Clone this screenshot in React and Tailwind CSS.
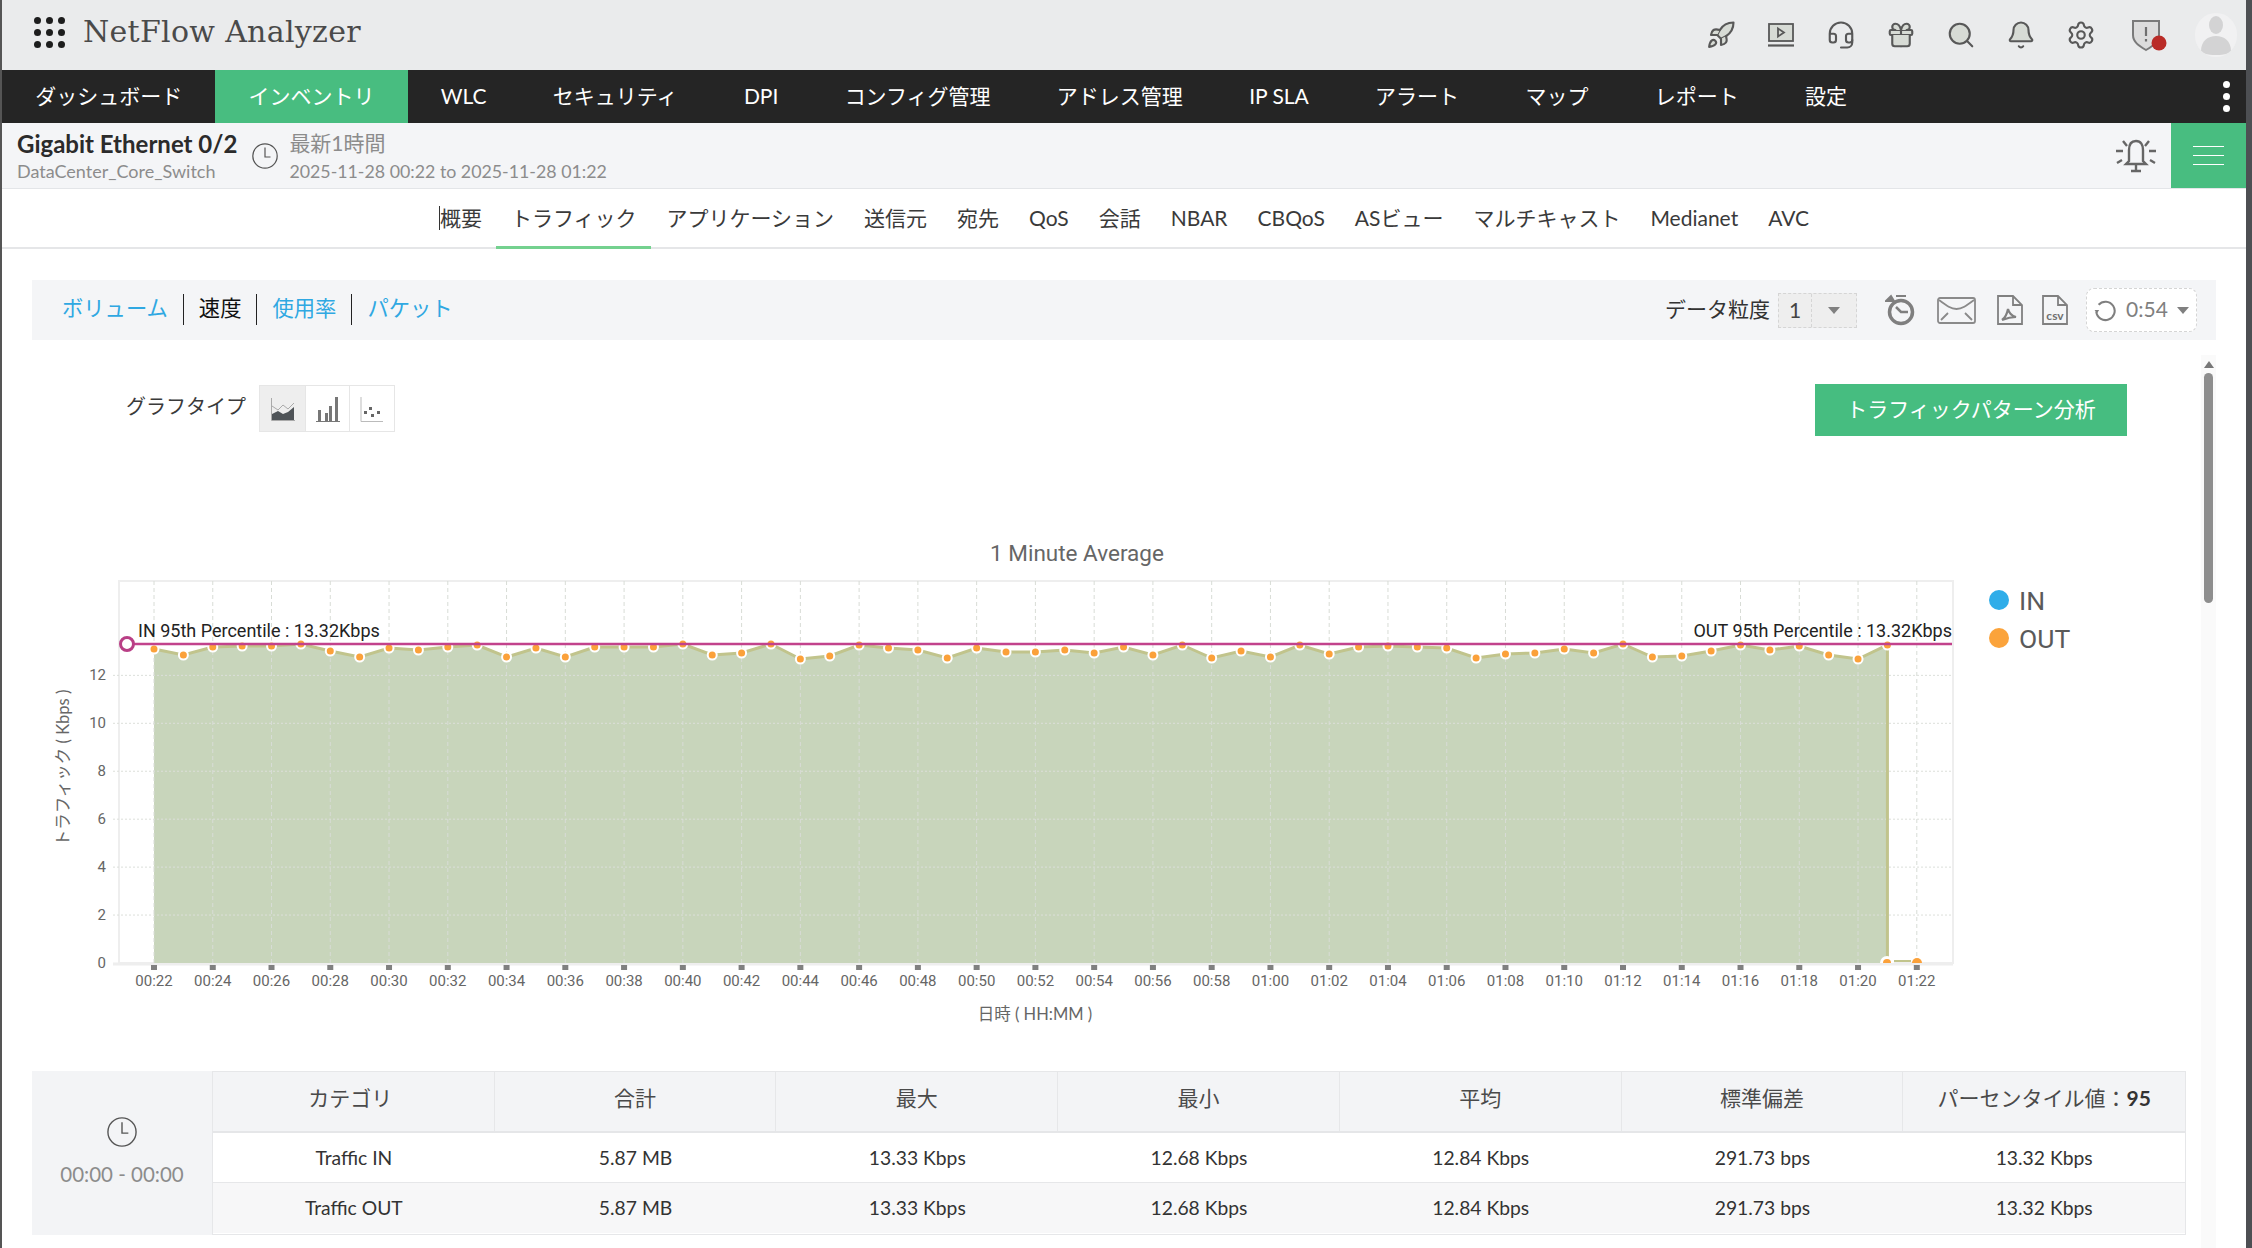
import React from 'react'
import { Rocket, Headset, Gift, Search, Bell, Settings } from 'lucide-react'

const NAV = ['ダッシュボード', 'インベントリ', 'WLC', 'セキュリティ', 'DPI', 'コンフィグ管理', 'アドレス管理', 'IP SLA', 'アラート', 'マップ', 'レポート', '設定']
const TABS = ['トラフィック', 'アプリケーション', '送信元', '宛先', 'QoS', '会話', 'NBAR', 'CBQoS', 'ASビュー', 'マルチキャスト', 'Medianet', 'AVC']
const HEAD = ['カテゴリ', '合計', '最大', '最小', '平均', '標準偏差']
const ROWS = [
  ['Traffic IN', '5.87 MB', '13.33 Kbps', '12.68 Kbps', '12.84 Kbps', '291.73 bps', '13.32 Kbps'],
  ['Traffic OUT', '5.87 MB', '13.33 Kbps', '12.68 Kbps', '12.84 Kbps', '291.73 bps', '13.32 Kbps'],
]

// y pixel of each minute sample, read off the plot
const SAMPLES = [
  649, 655, 647, 646, 646, 644, 651, 657, 648, 650, 647, 645, 657, 648, 657, 647, 647, 647, 644,
  655, 653, 644, 659, 656, 645, 648, 650, 658, 648, 652, 652, 650, 653, 647, 655, 645, 658, 651, 657,
  645, 654, 647, 646, 647, 648, 658, 654, 653, 649, 653, 644, 657, 656, 651, 645, 650, 646, 655, 659, 645,
]
const X0 = 154
const STEP = 29.38
const BOTTOM = 963
const xAt = i => X0 + i * STEP

function minuteLabel(i){
  const total = 22 + i
  const h = Math.floor(total / 60)
  const m = total % 60
  return `${String(h).padStart(2, '0')}:${String(m).padStart(2, '0')}`
}

function Chart(){
  const line = SAMPLES.map((y, i) => `${xAt(i)},${y}`).join(' ')
  const area = `${X0},${BOTTOM} ${line} ${xAt(59)},${BOTTOM}`
  const evens = Array.from({ length: 31 }, (_, i) => i * 2)
  const yTicks = [0, 2, 4, 6, 8, 10, 12]
  return (
    <svg viewBox="32 530 2169 510" className="w-[2169px] h-[510px] block font-[Roboto,sans-serif]">
      <text x="1077" y="561" textAnchor="middle" fontSize="22.500" fill="#666">1 Minute Average</text>
      <rect x="119" y="581" width="1834" height="382" fill="#fff" stroke="#eee" strokeWidth="2" />
      <line x1="113" x2="1953" y1={BOTTOM + 1} y2={BOTTOM + 1} stroke="#eee" strokeWidth="3" />
      <polygon points={area} fill="#c8d5bb" />
      {evens.map(m => (
        <g key={m}>
          <line x1={xAt(m)} x2={xAt(m)} y1="581" y2={BOTTOM} stroke="#d8dcd6" strokeDasharray="4 3" />
          <rect x={xAt(m) - 3} y="965" width="6" height="5" fill="#808080" />
          <text x={xAt(m)} y="986" textAnchor="middle" fontSize="15" fill="#666">{minuteLabel(m)}</text>
        </g>
      ))}
      {yTicks.map(v => {
        const y = BOTTOM - v * 23.97
        return (
          <g key={v}>
            {v > 0 && <line x1="113" x2="1953" y1={y} y2={y} stroke="#dcdfda" strokeDasharray="2 2" />}
            <text x="106" y={y + 5} textAnchor="end" fontSize="15" fill="#666">{v}</text>
          </g>
        )
      })}
      <polyline points={`${line} ${xAt(59)},${BOTTOM}`} fill="none" stroke="#c1c48c" strokeWidth="3" />
      <line x1="1894" x2="1911" y1="961" y2="961" stroke="#c1c48c" strokeWidth="2" />
      {SAMPLES.map((y, i) => (
        <circle key={i} cx={xAt(i)} cy={y} r="4.500" fill="#fba13a" stroke="#fff" strokeWidth="2" />
      ))}
      <path d="M1880 963a7 7 0 0 1 14 0z" fill="#fff" />
      <path d="M1883 963a4 4 0 0 1 8 0z" fill="#fba13a" />
      <path d="M1912 963a5 5 0 0 1 10 0z" fill="#fba13a" />
      <line x1="127" x2="1952" y1="644" y2="644" stroke="#c2428c" strokeWidth="2.500" />
      <circle cx="127" cy="644" r="6.500" fill="#fff" stroke="#b93f86" strokeWidth="3" />
      <text x="138" y="637" fontSize="18" fill="#222">IN 95th Percentile : 13.32Kbps</text>
      <text x="1952" y="637" textAnchor="end" fontSize="18" fill="#222">OUT 95th Percentile : 13.32Kbps</text>
      <text x="1035" y="1020" textAnchor="middle" fontSize="16.500" fill="#666" className="font-[Lato,'Noto_Sans_CJK_JP',sans-serif]">日時 ( HH:MM )</text>
      <text transform="translate(69 768) rotate(-90)" textAnchor="middle" fontSize="16.500" fill="#666" className="font-[Lato,'Noto_Sans_CJK_JP',sans-serif]">トラフィック ( Kbps )</text>
      <circle cx="1999" cy="600" r="10" fill="#2fade9" />
      <text x="2019" y="610" fontSize="26.500" fill="#5a5a5a">IN</text>
      <circle cx="1999" cy="638" r="10" fill="#fba33b" />
      <text x="2019" y="648" fontSize="26.500" fill="#5a5a5a">OUT</text>
    </svg>
  )
}

function ClockIcon({size = 26, color = '#555'}){
  return (
    <svg width={size} height={size} viewBox="0 0 26 26" fill="none" stroke={color} strokeWidth="1.2">
      <circle cx="13" cy="13" r="12.2" />
      <path d="M13 4.500V14H18.500" />
    </svg>
  )
}

function TopIcons(){
  const common = { size: 30, color: '#585858', strokeWidth: 1.7 }
  const box = 'w-[60px] flex items-center justify-center'
  return (
    <div className="ml-auto flex items-center pr-[9px]">
      <div className={box}><Rocket {...common} fill="#d7dbd5" /></div>
      <div className={box}>
        <svg width="28" height="28" viewBox="0 0 28 28" fill="none" stroke="#585858" strokeWidth="1.8">
          <rect x="2" y="3" width="24" height="17" fill="#d7dbd5" />
          <path d="M11 7.500v8l6-4z" />
          <path d="M1 24.500h26" strokeWidth="2.200" />
        </svg>
      </div>
      <div className={box}><Headset {...common} /></div>
      <div className={box}><Gift {...common} fill="#d7dbd5" /></div>
      <div className={box}><Search {...common} fill="#d7dbd5" /></div>
      <div className={box}><Bell {...common} fill="#d7dbd5" /></div>
      <div className={box}><Settings {...common} /></div>
      <div className="w-[60px] ml-[8px] flex items-center justify-center">
        <svg width="38" height="34" viewBox="0 0 38 34">
          <path d="M3 3h26v14c0 7-6 11-13 15C9 28 3 24 3 17z" fill="#dcdcdc" stroke="#7a7a7a" strokeWidth="2" />
          <path d="M16 9v9M16 21v2.500" stroke="#6f6f6f" strokeWidth="2.200" />
          <circle cx="29" cy="25" r="7.500" fill="#b92b27" />
        </svg>
      </div>
      <div className="w-[42px] h-[44px] ml-[16px] rounded-full bg-[#f1f1f2] flex items-center justify-center overflow-hidden">
        <svg width="32" height="40" viewBox="0 0 32 40" fill="#d3d3d4">
          <ellipse cx="16" cy="10" rx="7" ry="9" />
          <path d="M1 36c0-10 7-15 15-15s15 5 15 15c0 2-6 4-15 4S1 38 1 36z" />
        </svg>
      </div>
    </div>
  )
}

function ToolbarIcons(){
  return (
    <div className="flex items-center">
      <svg className="ml-[28px]" width="30" height="32" viewBox="0 0 30 32" fill="none" stroke="#7f7f7f">
        <circle cx="16" cy="18" r="11.500" strokeWidth="3.500" />
        <path d="M11 13l5 5h7" strokeWidth="2.500" />
        <path d="M1 7l5-5 3 5z M11 2h10" fill="#7f7f7f" strokeWidth="2" />
      </svg>
      <svg className="ml-[22px]" width="39" height="27" viewBox="0 0 39 27" fill="none" stroke="#8a8a8a" strokeWidth="1.800">
        <rect x="1" y="1" width="37" height="25" rx="2" />
        <path d="M2 3c8 6 12 9 17.500 9S29 9 37 3M4 23l7-7M35 23l-7-7" />
      </svg>
      <svg className="ml-[21px]" width="26" height="30" viewBox="0 0 26 30" fill="none" stroke="#808080" strokeWidth="1.800">
        <path d="M1 1h15l9 9v19H1zM16 1v9h9" />
        <path d="M5 25c3-2 5-6 6-11 1 4 4 7 8 8-5 0-9 1-14 3z" strokeWidth="2.200" />
      </svg>
      <svg className="ml-[19px]" width="26" height="30" viewBox="0 0 26 30" fill="none" stroke="#808080" strokeWidth="1.800">
        <path d="M1 1h15l9 9v19H1zM16 1v9h9" />
        <text x="13" y="25" textAnchor="middle" fontSize="12" fontWeight="700" fill="#707070" stroke="none">csv</text>
      </svg>
      <div className="ml-[18px] w-[111px] h-[44px] bg-white border border-dashed border-[#d5d5d5] rounded-lg flex items-center justify-center gap-[9px] text-[21px] text-[#808080]">
        <svg width="23" height="23" viewBox="0 0 20 20" fill="none" stroke="#7f7f7f" strokeWidth="1.800">
          <path d="M4 5a8 8 0 1 1-2 6" />
          <path d="M0.500 9.500h4l-2 3z" fill="#7f7f7f" stroke="none" />
        </svg>
        <span className="pb-[3px]">0:54</span>
        <span className="w-0 h-0 border-x-[6px] border-x-transparent border-t-[7px] border-t-[#808080]" />
      </div>
    </div>
  )
}

function GraphTypes(){
  return (
    <div className="flex h-[47px] border border-[#e6e6e6] ml-[13px]">
      <div className="w-[45px] bg-[#eeeeee] flex items-center justify-center">
        <svg width="24" height="24" viewBox="0 0 24 24" fill="none">
          <path d="M0.500 1v22.500H24" stroke="#aaa" />
          <path d="M1 9l6 4 5-5 5 4 6-6" stroke="#aaa" />
          <path d="M1 23l0-6 6-3 5 3 5-2 6-5v13H1z" fill="#4f5458" />
        </svg>
      </div>
      <div className="w-[45px] border-x border-[#e6e6e6] flex items-center justify-center">
        <svg width="24" height="26" viewBox="0 0 24 26" fill="#777">
          <rect x="2" y="14" width="3" height="11" /><rect x="9" y="17" width="3" height="8" />
          <rect x="13" y="10" width="3" height="15" /><rect x="19" y="1" width="3" height="24" />
          <rect x="0" y="25" width="24" height="1" />
        </svg>
      </div>
      <div className="w-[44px] flex items-center justify-center">
        <svg width="24" height="26" viewBox="0 0 24 26" fill="#666">
          <path d="M1 1v24.500h22" fill="none" stroke="#bbb" />
          <rect x="4" y="15" width="3" height="3" /><rect x="9" y="11" width="3" height="3" />
          <rect x="11" y="18" width="3" height="3" /><rect x="17" y="15" width="3" height="3" />
        </svg>
      </div>
    </div>
  )
}

export default function App(){
  return (
    <div className="w-full h-[1248px] overflow-hidden bg-white border-l-2 border-r-[6px] border-l-[#555] border-r-[#4d4f53] font-[Lato,'Noto_Sans_CJK_JP',sans-serif] text-[#333]">
      <header className="h-[70px] bg-[#eaebec] flex items-center">
        <div className="ml-[32px] mb-[6px] grid grid-cols-3 gap-x-[5px] gap-y-[5px] w-[31px]">
          {Array.from({ length: 9 }, (_, i) => <span key={i} className="w-[7px] h-[7px] rounded-full bg-[#1d1d1d]" />)}
        </div>
        <div className="ml-[18px] mb-[8px] text-[30px] font-['DejaVu_Serif',serif] font-light tracking-[0.300px] text-[#4a4a4a]">NetFlow Analyzer</div>
        <TopIcons />
      </header>

      <nav className="h-[53px] bg-[#252525] flex items-stretch text-[21px] text-white">
        {NAV.map(n => (
          <div key={n} className={n === 'インベントリ' ? 'px-[33.150px] pb-[2px] flex items-center bg-[#48bd80]' : 'px-[33.150px] pb-[2px] flex items-center'}>{n}</div>
        ))}
        <div className="ml-auto mr-[16px] flex flex-col justify-center gap-[5px]">
          <span className="w-[7px] h-[7px] rounded-full bg-white" />
          <span className="w-[7px] h-[7px] rounded-full bg-white" />
          <span className="w-[7px] h-[7px] rounded-full bg-white" />
        </div>
      </nav>

      <div className="h-[66px] bg-[#f4f5f7] border-b border-[#e3e5e8] flex items-stretch">
        <div className="pl-[15px] flex flex-col justify-center">
          <div className="text-[24px] leading-[30px] font-bold text-[#2b2b2b]">Gigabit Ethernet 0/2</div>
          <div className="text-[18px] leading-[24px] text-[#8c8c8c]">DataCenter_Core_Switch</div>
        </div>
        <div className="ml-[15px] flex items-center"><ClockIcon /></div>
        <div className="ml-[11px] flex flex-col justify-center text-[#8c8c8c]">
          <div className="text-[21px] leading-[30px] pt-[1px]">最新1時間</div>
          <div className="text-[17.800px] leading-[26px]">2025-11-28 00:22 to 2025-11-28 01:22</div>
        </div>
        <div className="ml-auto mr-[14px] flex items-center">
          <svg width="42" height="34" viewBox="0 0 42 34" fill="none" stroke="#666" strokeWidth="2.400">
            <path d="M21 2c-5 0-7 4-7 9v11l-3 3h20l-3-3V11c0-5-2-9-7-9zM21 25v7M16 32h10" />
            <path d="M8 2l4 5M34 2l-4 5M1 12h7M34 12h7M2 24l5-3M40 24l-5-3" />
          </svg>
        </div>
        <div className="w-[75px] bg-[#48bd80] flex flex-col items-center justify-center gap-[7.500px]">
          <span className="w-[31px] h-[1.500px] bg-white" />
          <span className="w-[31px] h-[1.500px] bg-white" />
          <span className="w-[31px] h-[1.500px] bg-white" />
        </div>
      </div>

      <div className="h-[60px] border-b-2 border-[#e5e6e8] flex justify-center text-[21px] text-[#3a3a3a]">
        <div className="px-[15px] flex items-center"><span className="inline-block h-[24px] leading-[24px] border-l border-[#333] -mr-px">概要</span></div>
        {TABS.map(t => (
          <div key={t} className={t === 'トラフィック' ? 'px-[15px] flex items-center border-b-[3px] -mb-[2px] border-[#74d18f]' : 'px-[15px] flex items-center'}>{t}</div>
        ))}
      </div>

      <div className="ml-[30px] mr-[30px] mt-[31px] h-[60px] bg-[#f4f5f7] flex items-center justify-between pr-[19px] text-[21px]">
        <div className="pl-[15px] pb-[2px] flex items-center text-[21.300px] text-[#2fa8e2]">
          <span className="px-[15px]">ボリューム</span>
          <span className="w-px h-[31px] bg-[#222]" />
          <span className="px-[15px] text-[#111]">速度</span>
          <span className="w-px h-[31px] bg-[#222]" />
          <span className="px-[15px]">使用率</span>
          <span className="w-px h-[31px] bg-[#222]" />
          <span className="px-[15px]">パケット</span>
        </div>
        <div className="flex items-center">
          <span className="text-[#333] mr-[8px] pb-[2px]">データ粒度</span>
          <div className="w-[79px] h-[35px] bg-[#eeeeee] border border-dashed border-[#d5d5d5] flex items-stretch">
            <div className="w-[33px] border-r border-dashed border-[#d5d5d5] flex items-center justify-center text-[#444]">1</div>
            <div className="flex-1 flex items-center justify-center">
              <span className="w-0 h-0 border-x-[6px] border-x-transparent border-t-[7px] border-t-[#808080]" />
            </div>
          </div>
          <ToolbarIcons />
        </div>
      </div>

      <div className="ml-[30px] mr-[30px] mt-[15px] flex">
        <div className="flex-1">
          <div className="pt-[29px] flex items-start justify-between pr-[74px]">
            <div className="pl-[94px] mt-[1px] flex items-center text-[20px] text-[#3a3a3a]">
              <span className="pb-[5px]">グラフタイプ</span>
              <GraphTypes />
            </div>
            <button className="w-[312px] h-[52px] bg-[#46bd80] text-white text-[21px] pb-[2px]">トラフィックパターン分析</button>
          </div>
          <div className="mt-[94px]"><Chart /></div>
          <div className="mt-[31px] w-[2154px] h-[164px] flex">
            <div className="w-[180px] bg-[#f3f4f6] flex flex-col items-center justify-center gap-[12px] text-[20.500px] text-[#8c8c8c]">
              <ClockIcon size={30} />
              <span>00:00 - 00:00</span>
            </div>
            <div className="flex-1 border border-[#e6e7e9] text-center">
              <div className="grid grid-cols-7 h-[61px] bg-[#f3f4f6] border-b-2 border-[#e5e6e8] text-[21px] text-[#4a4a4a]">
                {HEAD.map((h, i) => <div key={h} className={i === 0 ? 'border-r border-[#e6e7e9] flex items-center justify-center pb-[7px] pr-[6px]' : 'border-r border-[#e6e7e9] flex items-center justify-center pb-[7px]'}>{h}</div>)}
                <div className="flex items-center justify-center pb-[7px]">パーセンタイル値：<b className="text-[#333]">95</b></div>
              </div>
              {ROWS.map((r, i) => (
                <div key={r[0]} className={i === 0 ? 'grid grid-cols-7 h-[50px] border-b border-[#e6e7e9] text-[19.300px] pt-[1px]' : 'grid grid-cols-7 h-[50px] bg-[#f7f7f8] text-[19.300px]'}>
                  {r.map((c, j) => <div key={j} className="flex items-center justify-center">{c}</div>)}
                </div>
              ))}
            </div>
          </div>
        </div>
        <div className="w-[15px] h-[893px] bg-[#fafafa] flex flex-col items-center pt-[6px]">
          <span className="w-0 h-0 border-x-[5px] border-x-transparent border-b-[7px] border-b-[#777]" />
          <span className="w-[9px] h-[230px] mt-[5px] rounded-full bg-[#8e8e8e]" />
        </div>
      </div>
    </div>
  )
}
